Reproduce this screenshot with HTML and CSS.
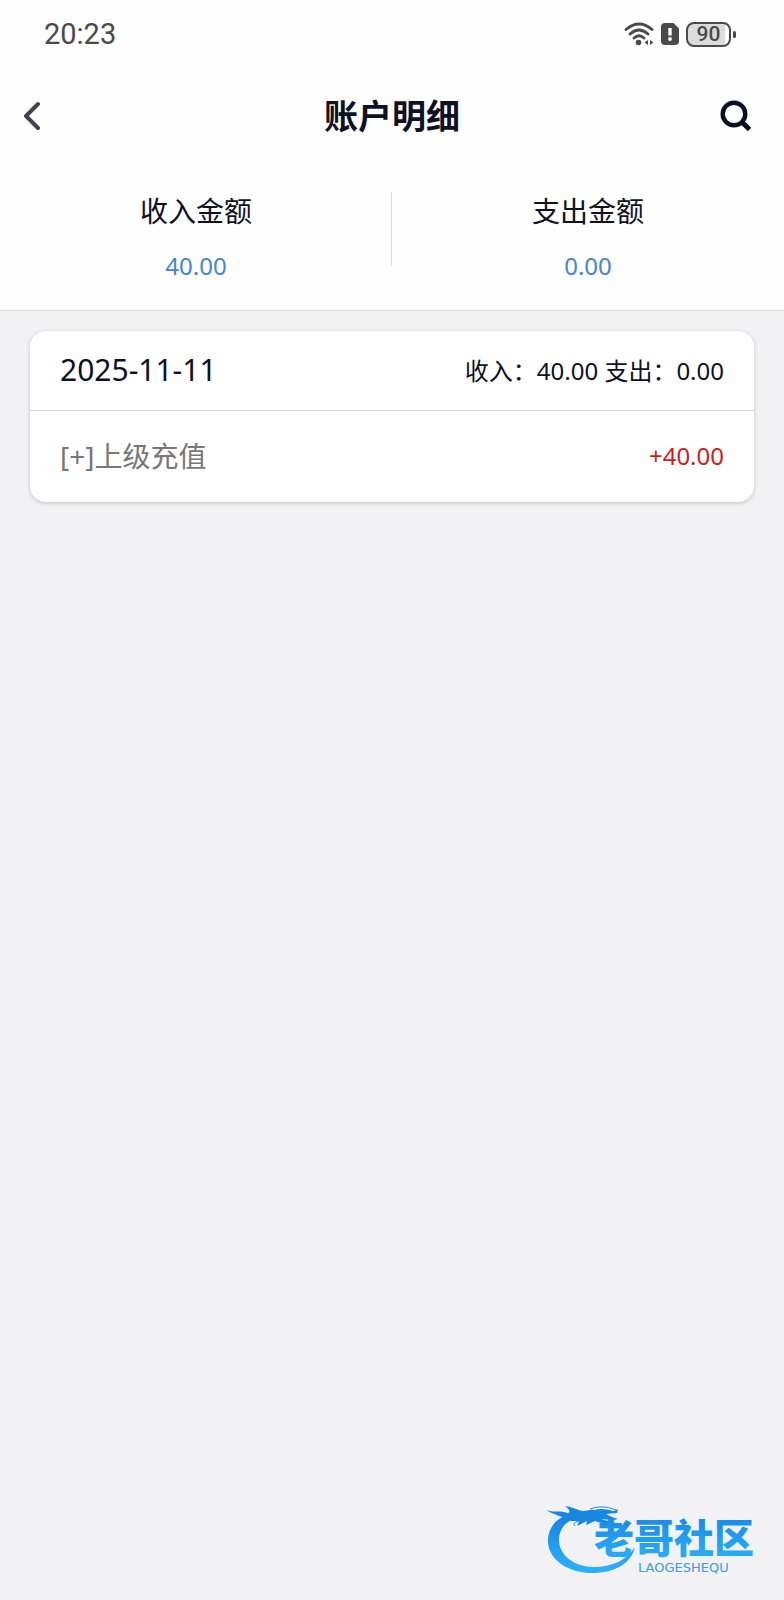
FILE: index.html
```html
<!DOCTYPE html>
<html lang="zh-CN">
<head>
  <meta charset="UTF-8">
  <meta name="viewport" content="width=device-width, initial-scale=1.0">
  <title>账户明细</title>
  <link rel="stylesheet" href="styles.css">
</head>
<body>
  <!-- Status Bar -->
  <div class="status-bar">
    <span class="time">20:23</span>
    <div class="status-icons">
      <svg width="30" height="24" viewBox="0 0 30 24" fill="none" stroke="#4a4a4a" stroke-width="2.800" stroke-linecap="round">
        <path d="M2 7.500Q15 -3.500 28 7.500"/>
        <path d="M6 12Q15 4 24 12"/>
        <path d="M10 16Q15 11.500 20 16"/>
        <circle cx="14.500" cy="20.500" r="2.800" fill="#4a4a4a" stroke="none"/>
        <path d="M24 18v5l-3.500-2.500zM26 18v5l3.500-2.500z" fill="#4a4a4a" stroke="none"/>
      </svg>
      <svg width="18" height="24" viewBox="0 0 18 24">
        <path d="M4 1h8.500L18 6.500V19a4 4 0 0 1-4 4H4a4 4 0 0 1-4-4V5a4 4 0 0 1 4-4z" fill="#4a4a4a"/>
        <path d="M9 6v7.500" stroke="#fff" stroke-width="3.400"/>
        <circle cx="9" cy="17" r="1.900" fill="#fff"/>
      </svg>
      <div class="battery">90</div>
    </div>
  </div>

  <!-- Header Section -->
  <header>
    <button class="icon-btn" aria-label="返回">
      <svg width="18" height="30" viewBox="0 0 18 30" fill="none" stroke="#454250" stroke-width="4" stroke-linecap="round" stroke-linejoin="round">
        <path d="M14 3L2 15l12 12"/>
      </svg>
    </button>
    <h1>账户明细</h1>
    <button class="icon-btn" aria-label="搜索">
      <svg width="32" height="32" viewBox="0 0 32 32" fill="none" stroke="#0b0d22" stroke-width="4.400">
        <circle cx="14" cy="14" r="11.300"/>
        <path d="M22 22l7.500 7.500" stroke-width="5"/>
      </svg>
    </button>
  </header>

  <!-- Summary Section -->
  <section class="summary">
    <div class="summary-item">
      <h2>收入金额</h2>
      <p>40.00</p>
    </div>
    <div class="summary-item">
      <h2>支出金额</h2>
      <p>0.00</p>
    </div>
  </section>

  <!-- Records Section -->
  <main>
    <section class="card">
      <div class="card-row card-head">
        <h3>2025-11-11</h3>
        <p>收入：40.00 支出：0.00</p>
      </div>
      <div class="card-row record">
        <span class="record-name">[+]上级充值</span>
        <span class="amount">+40.00</span>
      </div>
    </section>
  </main>

  <!-- Watermark -->
  <div class="watermark">
    <svg width="230" height="80" viewBox="0 0 230 80">
      <defs>
        <linearGradient id="blue" x1="0" y1="0" x2="0" y2="1">
          <stop offset="0" stop-color="#1384e2"/>
          <stop offset="1" stop-color="#2db2fb"/>
        </linearGradient>
      </defs>
      <path d="M31 14C16 17 7 29 8 43C10 62 31 74 55 73C75 72 91 64 95 47C87 60 72 67 54 67C34 67 19 55 19 40C19 29 26 21 36 18z" fill="url(#blue)"/>
      <path d="M6 10C13 13 20 10 28 13C31 12 29 9 25 6C33 7 37 10 43 11C47 11 50 9 54 10C60 8 66 9 74 11L78 9L77 13L66 14C70 16 74 18 78 19C72 21 66 19 61 19C66 21 71 21 75 22C70 25 60 23 55 21L46 25L47 21L37 26L39 21L31 21C24 17 14 15 6 10z" fill="#1788df"/>
      <path d="M50 9C58 6 66 6 76 10M39 21C34 22 33 24 35 26" fill="none" stroke="#1a8ee6"/>
      <text class="brand" x="54" y="53" fill="url(#blue)">老哥社区</text>
      <text class="brand-latin" x="98" y="72">LAOGESHEQU</text>
    </svg>
  </div>
</body>
</html>
```

FILE: styles.css
```css
/* General Styles */
* {
  margin: 0;
  padding: 0;
  box-sizing: border-box;
}

body {
  font-family: "Noto Sans", "Noto Sans CJK SC", sans-serif;
  background-color: #f2f2f4;
  color: #0e1024;
  min-height: 100vh;
  position: relative;
}

h1, h2, h3 {
  font-weight: 400;
}

/* Status Bar */
.status-bar {
  display: flex;
  justify-content: space-between;
  align-items: center;
  height: 68px;
  padding: 0 48px 0 44px;
  background-color: #fefefe;
}

.time {
  font-family: Roboto, sans-serif;
  font-size: 29px;
  color: #4a4a4a;
}

.status-icons {
  display: flex;
  align-items: center;
  gap: 7px;
}

.battery {
  width: 45px;
  height: 25px;
  margin-right: 5px;
  border: 2px solid #4a4a4a;
  border-radius: 8px;
  background: linear-gradient(to right, #dcdcdc 90%, #fefefe 90%);
  color: #4a4a4a;
  font: 500 21px/21px Roboto, sans-serif;
  text-align: center;
  position: relative;
}

.battery::after {
  content: "";
  position: absolute;
  right: -7px;
  top: 7px;
  width: 3px;
  height: 7px;
  border-radius: 2px;
  background-color: #4a4a4a;
}

/* Header */
header {
  display: flex;
  justify-content: space-between;
  align-items: center;
  height: 96px;
  padding: 0 24px;
  background-color: #fefefe;
}

header h1 {
  font-size: 34px;
  line-height: 48px;
  font-weight: 700;
}

.icon-btn {
  display: flex;
  width: 40px;
  border: none;
  background: none;
  cursor: pointer;
}

/* Summary */
.summary {
  display: flex;
  padding: 28px 0 26px;
  background-color: #fefefe;
  border-bottom: 1px solid #d9d9dc;
}

.summary-item {
  flex: 1;
  text-align: center;
}

.summary-item:first-child {
  background: linear-gradient(#d9d9dc, #d9d9dc) no-repeat right top / 1px 74px;
}

.summary-item h2 {
  font-size: 28px;
  line-height: 38px;
}

.summary-item p {
  margin-top: 18px;
  font-size: 24px;
  line-height: 36px;
  color: #4387d0;
}

/* Records */
main {
  padding: 20px 30px;
}

.card {
  background-color: #fff;
  border-radius: 16px;
  box-shadow: 0 1px 4px rgba(0, 0, 0, 0.2);
}

.card-row {
  display: flex;
  justify-content: space-between;
  align-items: center;
  padding: 0 30px 2px;
  font-size: 24px;
}

.card-head {
  height: 80px;
  border-bottom: 1px solid #d9d9dc;
}

.card-head h3 {
  font-size: 30px;
}

.record {
  height: 91px;
}

.record-name {
  font-size: 28px;
  line-height: 36px;
  color: #777;
}

.amount {
  color: #c91f20;
}

/* Watermark */
.watermark {
  position: absolute;
  right: 14px;
  bottom: 20px;
}

.watermark svg {
  display: block;
}

.brand {
  font-family: "Noto Sans CJK SC", sans-serif;
  font-size: 40px;
  font-weight: 900;
}

.brand-latin {
  font-family: "DejaVu Sans", sans-serif;
  font-size: 13px;
  fill: #3c9be4;
}
```
